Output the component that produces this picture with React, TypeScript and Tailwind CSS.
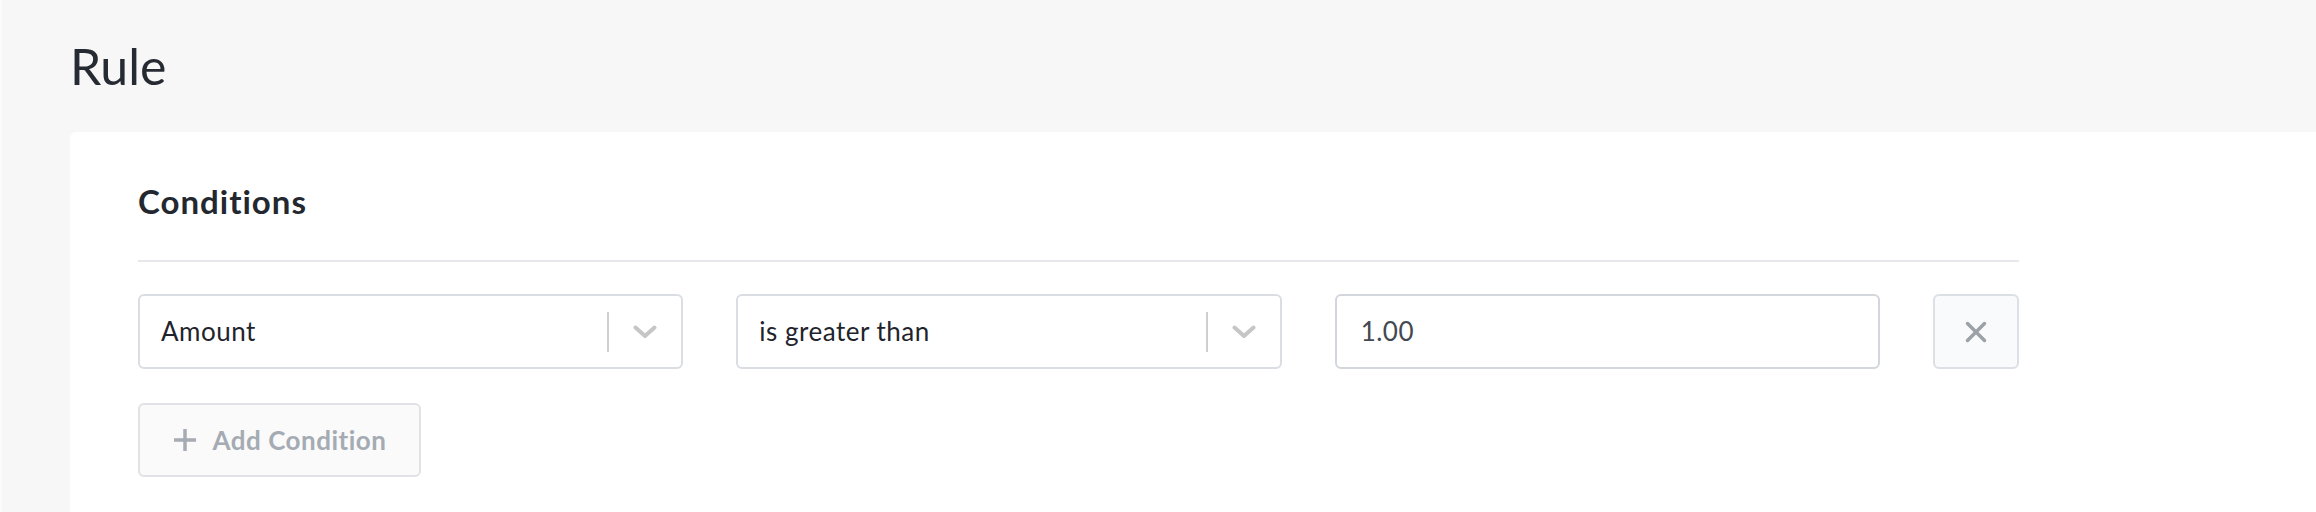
import React from 'react'

function Chevron() {
  return (
    <svg width="24" height="14" viewBox="0 0 24 14" fill="none">
      <polyline points="2.5,2.5 12,11 21.5,2.5" stroke="#c6c6c6" strokeWidth="4" strokeLinecap="round" strokeLinejoin="round" />
    </svg>
  )
}

function SelectBox({ label }: { label: string }) {
  return (
    <div className="flex-1 h-[75px] flex items-center border-2 border-[#dadde1] rounded-md bg-white">
      <span className="flex-1 pl-[21px] text-[26px] tracking-[0.5px] text-[#1f242c]">{label}</span>
      <span className="w-[2px] h-[40px] bg-[#cfcfcf]" />
      <span className="w-[72px] flex items-center justify-center">
        <Chevron />
      </span>
    </div>
  )
}

export default function App() {
  return (
    <div
      className="w-full h-[512px] overflow-hidden bg-[#f7f7f7] border-l-2 border-[#fcfcfc] flex flex-col"
      style={{ fontFamily: 'Lato, "Open Sans", sans-serif' }}
    >
      <h1 className="pl-[68px] pt-[36px] text-[50px] leading-[60px] font-normal text-[#262b33]">Rule</h1>

      <div className="ml-[68px] mt-[36px] flex-1 bg-white rounded-tl-md pl-[68px] pt-[52px]">
        <div className="w-[1881px]">
          <h2 className="text-[33px] leading-[35px] tracking-[1px] font-bold text-[#232830]">Conditions</h2>
          <div className="mt-[41px] h-[2px] bg-[#e6e8eb]" />

          <div className="mt-[32px] flex gap-[53px]">
            <SelectBox label="Amount" />
            <SelectBox label="is greater than" />
            <div className="flex-1 h-[75px] flex items-center border-2 border-[#d3d7dc] rounded-md bg-white">
              <span className="pl-[24px] text-[26px] tracking-[0.5px] text-[#434951]">1.00</span>
            </div>
            <button className="w-[86px] h-[75px] flex items-center justify-center border-2 border-[#dcdfe3] rounded-md bg-[#f9fafb]">
              <svg width="22" height="22" viewBox="0 0 22 22" fill="none">
                <path d="M2.5 2.5L19.5 19.5M19.5 2.5L2.5 19.5" stroke="#9ca1a8" strokeWidth="3.5" strokeLinecap="round" />
              </svg>
            </button>
          </div>

          <button className="mt-[34px] w-[283px] h-[74px] flex items-center justify-center gap-[16px] border-2 border-[#e0e2e5] rounded-md bg-[#fafafa]">
            <svg width="24" height="24" viewBox="0 0 24 24" fill="none">
              <path d="M12 1V23M1 12H23" stroke="#a6acb3" strokeWidth="3.5" />
            </svg>
            <span className="text-[26px] tracking-[0.5px] font-bold text-[#a5abb3]">Add Condition</span>
          </button>
        </div>
      </div>
    </div>
  )
}
